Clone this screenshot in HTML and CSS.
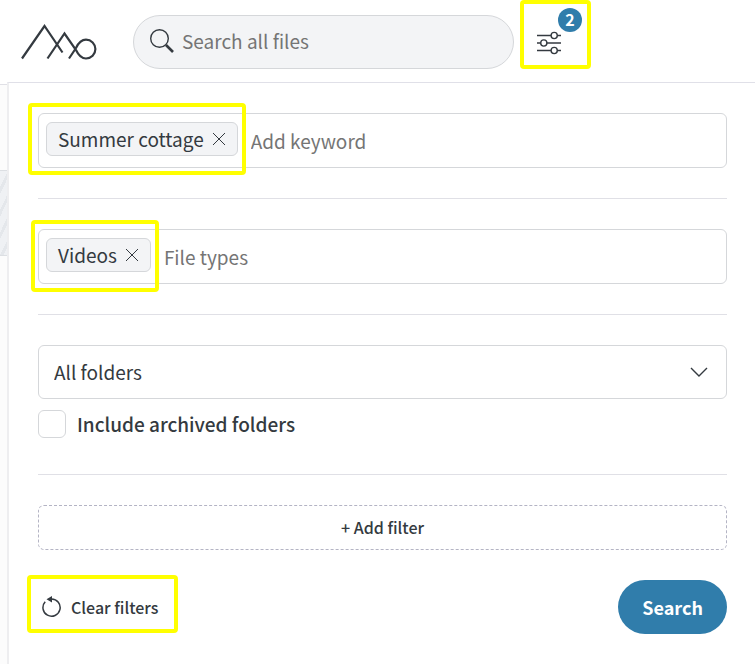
FILE: index.html
```
<!DOCTYPE html>
<html lang="en">
<head>
  <meta charset="UTF-8">
  <meta name="viewport" content="width=device-width, initial-scale=1.0">
  <title>Search all files</title>
  <link rel="stylesheet" href="styles.css">
</head>
<body>
  <header class="header">
    <a class="logo" href="#" aria-label="Home">
      <svg viewBox="0 0 78 40" fill="none" stroke="currentColor" stroke-width="2.2">
        <path d="M2 36.500L24.500 4L42.500 30.500"/>
        <path d="M27.500 36.500L44.500 11.500L56 28Q60 36.500 66 36.500A9.400 9.400 0 1 0 66 17.700Q60 17.700 56 26L49 36.500"/>
      </svg>
    </a>
    <label class="search">
      <svg viewBox="0 0 24 24" fill="none" stroke="currentColor">
        <circle cx="9.500" cy="9.500" r="8.800" stroke-width="1.400"/>
        <path d="M16 16L23 23" stroke-width="2.600"/>
      </svg>
      <input type="search" placeholder="Search all files" aria-label="Search all files">
    </label>
    <button class="filter-toggle highlight" type="button" aria-label="Filters">
      <svg viewBox="0 0 24 24" fill="none" stroke="currentColor" stroke-width="1.400">
        <path d="M0 4.500H14M20.500 4.500H24M0 12H3.500M10 12H24M0 19.500H14M20.500 19.500H24"/>
        <circle cx="17.200" cy="4.500" r="3.100"/>
        <circle cx="6.800" cy="12" r="3.100"/>
        <circle cx="17.200" cy="19.500" r="3.100"/>
      </svg>
      <span class="badge">2</span>
    </button>
  </header>

  <div class="content">
    <div class="backdrop">
      <div class="thumb"></div>
    </div>

    <form class="panel">
      <div class="field">
        <span class="chip chip-keyword highlight">
          Summer cottage
          <button type="button" aria-label="Remove Summer cottage">
            <svg viewBox="0 0 12 12" stroke="currentColor"><path d="M0 0L12 12M12 0L0 12"/></svg>
          </button>
        </span>
        <input type="text" placeholder="Add keyword" aria-label="Add keyword">
      </div>
      <hr>
      <div class="field">
        <span class="chip chip-type highlight">
          Videos
          <button type="button" aria-label="Remove Videos">
            <svg viewBox="0 0 12 12" stroke="currentColor"><path d="M0 0L12 12M12 0L0 12"/></svg>
          </button>
        </span>
        <input type="text" placeholder="File types" aria-label="File types">
      </div>
      <hr>
      <div class="folders">
        <div class="select">
          <select aria-label="Folder">
            <option>All folders</option>
          </select>
          <svg viewBox="0 0 18 10" fill="none" stroke="currentColor" stroke-width="1.400"><path d="M1 1L9 9L17 1"/></svg>
        </div>
        <label class="check">
          <input type="checkbox">
          Include archived folders
        </label>
      </div>
      <hr>
      <button class="add-filter" type="button">+ Add filter</button>
      <div class="actions">
        <button class="clear highlight" type="reset">
          <svg viewBox="0 1 20 22" fill="none" stroke="currentColor" stroke-width="1.500">
            <path d="M3.200 6.800A8.600 8.600 0 1 0 9.500 4"/>
            <path d="M4.500 4.200L10 1V7.400Z" fill="currentColor" stroke="none"/>
          </svg>
          Clear filters
        </button>
        <button class="submit" type="submit">Search</button>
      </div>
    </form>
  </div>
</body>
</html>
```
FILE: styles.css
```
* {
  margin: 0;
  padding: 0;
  box-sizing: border-box;
}

body {
  font-family: "Source Sans Pro", "Noto Sans CJK SC", sans-serif;
  font-size: 19px;
  line-height: 28px;
  color: #343a40;
  background: #fff;
  min-height: 100vh;
  display: flex;
  flex-direction: column;
}

button,
input,
select {
  font: inherit;
  color: inherit;
  background: none;
  border: none;
  outline: none;
}

button {
  cursor: pointer;
}

svg {
  display: block;
  flex-shrink: 0;
}

::placeholder {
  color: #757575;
  opacity: 1;
}

/* yellow marker frame around an element */
.highlight {
  position: relative;
}

.highlight::after {
  content: '';
  position: absolute;
  inset: 0;
  border: 4px solid #ff0;
  border-radius: 4px;
  pointer-events: none;
}

.header {
  display: flex;
  align-items: center;
  height: 82px;
  padding: 2px 0 0 20px;
}

.logo {
  color: #343a40;
  margin-right: 35px;
}

.logo svg {
  width: 78px;
  height: 40px;
}

.search {
  display: flex;
  align-items: center;
  gap: 8px;
  flex: 0 1 381px;
  height: 54px;
  padding: 0 16px 2px;
  background: #f3f4f6;
  border: 1px solid #d5d7da;
  border-radius: 27px;
}

.search svg {
  width: 24px;
  height: 24px;
}

.search input {
  flex: 1;
  min-width: 0;
}

.filter-toggle {
  align-self: flex-start;
  width: 71px;
  height: 69px;
  margin: -2px 0 0 6px;
  padding: 16px 0 0 17px;
}

.filter-toggle svg {
  width: 24px;
  height: 24px;
}

.badge {
  position: absolute;
  top: 8px;
  right: 9px;
  width: 24px;
  height: 24px;
  border-radius: 50%;
  background: #307dab;
  color: #fff;
  font-size: 16px;
  font-weight: 700;
  line-height: 22px;
}

.content {
  flex: 1;
  display: flex;
}

.backdrop {
  width: 7px;
  margin-top: 2px;
  padding-top: 85px;
  background: #fcfcfc;
  border-top: 1px solid #e0e0e6;
}

.thumb {
  height: 86px;
  border: solid #dcdfe3;
  border-width: 1px 0;
  background: repeating-linear-gradient(116deg, #eff1f4 0 7px, #e4e7eb 7px 10px);
}

.panel {
  flex: 1;
  min-width: 0;
  padding: 30px 28px 30px 29px;
  border-top: 1px solid #e0e0e8;
  border-left: 2px solid #eeeef0;
}

.panel hr {
  margin: 30px 0;
  border: none;
  border-top: 1px solid #e0e0e6;
}

.field {
  display: flex;
  align-items: flex-start;
  height: 55px;
  padding: 8px 7px;
  border: 1px solid #d5d7da;
  border-radius: 6px;
}

.field input {
  flex: 1;
  min-width: 0;
  height: 36px;
  margin-left: 13px;
}

.chip {
  display: flex;
  align-items: center;
  gap: 9px;
  height: 34px;
  padding: 0 12px 0 11px;
  background: #f3f4f6;
  border: 1px solid #d5d7da;
  border-radius: 6px;
  line-height: 26px;
  white-space: nowrap;
}

.chip svg {
  width: 12px;
  height: 12px;
}

.chip-keyword::after {
  inset: -20px -9px -20px -19px;
}

.chip-type::after {
  inset: -19px -9px -21px -16px;
}

.folders {
  padding-bottom: 6px;
}

.select {
  position: relative;
}

.select select {
  display: block;
  width: 100%;
  height: 54px;
  padding: 0 48px 0 15px;
  border: 1px solid #d5d7da;
  border-radius: 6px;
  appearance: none;
}

.select svg {
  position: absolute;
  top: 22px;
  right: 19px;
  width: 18px;
  height: 10px;
  pointer-events: none;
}

.check {
  display: flex;
  align-items: center;
  gap: 11px;
  margin-top: 11px;
  font-weight: 500;
}

.check input {
  width: 28px;
  height: 28px;
  border: 1px solid #d5d7da;
  border-radius: 6px;
  appearance: none;
}

.check input:checked {
  background: #307dab;
}

.add-filter {
  display: block;
  width: 100%;
  height: 45px;
  padding-bottom: 2px;
  border: 1px dashed #b4b4c4;
  border-radius: 6px;
  font-size: 16px;
  font-weight: 500;
}

.actions {
  display: flex;
  align-items: center;
  justify-content: space-between;
  margin-top: 30px;
}

.clear {
  display: flex;
  align-items: center;
  gap: 9px;
  padding: 0 4px;
  font-size: 16px;
  font-weight: 500;
}

.clear::after {
  inset: -18px -16px -12px -11px;
}

.clear svg {
  width: 20px;
  height: 22px;
}

.submit {
  height: 54px;
  padding: 0 24px;
  border-radius: 27px;
  background: #307dab;
  color: #fff;
  font-size: 18px;
  font-weight: 700;
}
```
